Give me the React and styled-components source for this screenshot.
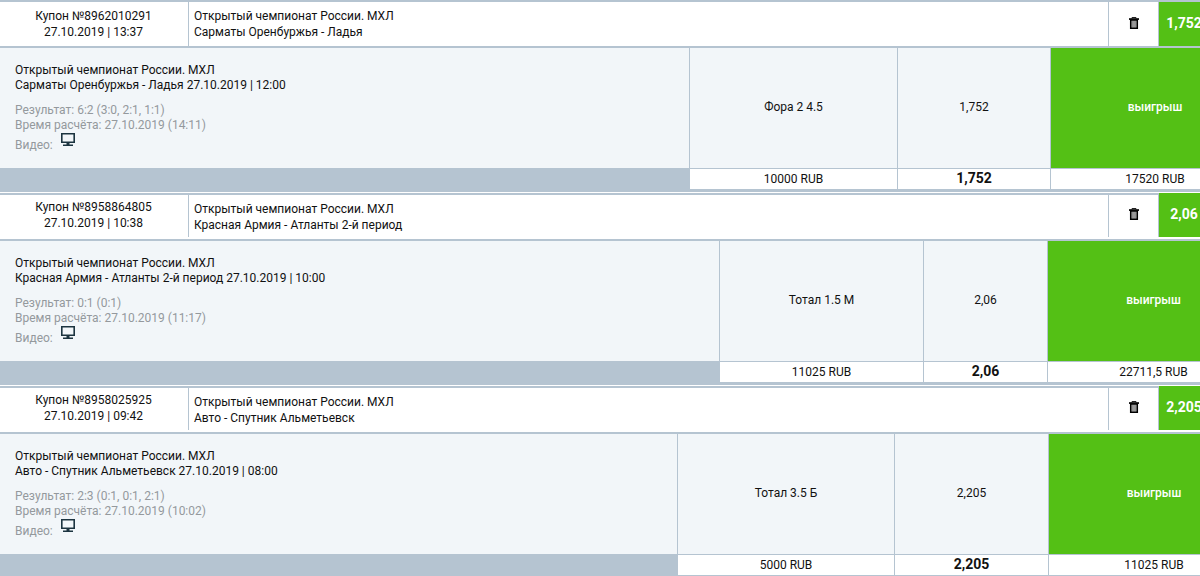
import React from 'react';
import styled, { createGlobalStyle } from 'styled-components';

const GlobalStyle = createGlobalStyle`
  * {
    box-sizing: border-box;
  }
  body {
    margin: 0;
    background: #fff;
    overflow: hidden;
    font-family: Roboto, 'Open Sans', sans-serif;
    font-size: 12px;
    color: #111;
  }
`;

const Page = styled.main`
  width: 1200px;
  height: 576px;
  overflow: hidden;
`;

const Coupon = styled.section`
  height: 192px;
  margin-bottom: 1px;
`;

const Header = styled.header`
  display: grid;
  grid-template-columns: 189px 920px 50px 50px;
  height: 48px;
  border-top: 2px solid #b5c4d1;
  border-bottom: 2px solid #b5c4d1;
  line-height: 16px;
`;

const HeaderCell = styled.div`
  height: ${({ $raised }) => ($raised ? '42px' : '44px')};
  border-right: 1px solid #b5c4d1;
`;

const CouponInfo = styled(HeaderCell)`
  padding: ${({ $raised }) => ($raised ? '4px' : '6px')} 1px 0 0;
  text-align: center;
`;

const MatchTitle = styled(HeaderCell)`
  padding: 6px 0 0 5px;
`;

const RemoveCell = styled(HeaderCell)`
  display: flex;
  justify-content: center;
  padding-top: ${({ $raised }) => ($raised ? '13px' : '15px')};
`;

const HeaderRate = styled.div`
  height: 44px;
  margin-top: ${({ $raised }) => ($raised ? '-2px' : '0')};
  padding-top: 1px;
  background: #54c015;
  color: #fff;
  font-size: 14px;
  font-weight: 700;
  line-height: 41px;
  text-align: center;
`;

const Body = styled.div`
  display: grid;
  grid-template-columns: ${({ $columns }) => $columns};
  grid-template-rows: 120px 21px;
  border-bottom: 3px solid #b5c4d1;
`;

const Details = styled.div`
  padding: 15px 0 0 15px;
  background: #f2f6f9;
  line-height: 15px;
`;

const Results = styled.div`
  margin-top: 10px;
  color: #94999d;
`;

const Video = styled.div`
  display: flex;
  padding-top: 5px;

  svg {
    margin: -5px 0 0 8px;
  }
`;

const Cell = styled.div`
  display: flex;
  align-items: center;
  justify-content: center;
  padding-bottom: 2px;
  border-left: 1px solid #b5c4d1;
  background: #f2f6f9;
`;

const WinCell = styled(Cell)`
  background: #54c015;
  color: #fff;
  font-weight: 500;
`;

const FooterBar = styled.div`
  margin-right: -1px;
  background: #b5c4d1;
  z-index: 1;
`;

const Total = styled(Cell)`
  padding: 0 0 ${({ $bold }) => ($bold ? '2px' : '0')};
  border-top: 1px solid #b5c4d1;
  background: #fff;
  font-size: ${({ $bold }) => ($bold ? '14px' : '12px')};
  font-weight: ${({ $bold }) => ($bold ? 700 : 400)};
  line-height: 16px;
`;

const TrashIcon = () => (
    <svg width="12" height="13" viewBox="0 0 12 13">
        <path d="M4 1.5V.5h4v1" fill="none" stroke="#222" />
        <path d="M1 1.2h10v1.7H1z" fill="#000" />
        <path d="M2.7 3h6.6v8.2H2.7z" fill="#aaa" stroke="#000" strokeWidth="1.5" />
        <path d="M4.9 4v6.4M7.1 4v6.4" stroke="#666" strokeWidth=".6" />
    </svg>
);

const MonitorIcon = () => (
    <svg width="14" height="13" viewBox="0 0 14 13">
        <path d="M.8.8h12.4v8.4H.8z" fill="none" stroke="#1c3440" strokeWidth="1.6" />
        <path d="M5.5 9h3v2.5h-3zM2 11.5h10V13H2z" fill="#1c3440" />
    </svg>
);

const coupons = [
    {
        id: '8962010291',
        date: '27.10.2019 | 13:37',
        match: 'Сарматы Оренбуржья - Ладья',
        start: '27.10.2019 | 12:00',
        result: '6:2 (3:0, 2:1, 1:1)',
        settled: '27.10.2019 (14:11)',
        bet: 'Фора 2 4.5',
        rate: '1,752',
        stake: '10000 RUB',
        payout: '17520 RUB',
        columns: '689px 208px 153px 209px',
    },
    {
        id: '8958864805',
        date: '27.10.2019 | 10:38',
        match: 'Красная Армия - Атланты 2-й период',
        start: '27.10.2019 | 10:00',
        result: '0:1 (0:1)',
        settled: '27.10.2019 (11:17)',
        bet: 'Тотал 1.5 М',
        rate: '2,06',
        stake: '11025 RUB',
        payout: '22711,5 RUB',
        columns: '719px 204px 124px 212px',
    },
    {
        id: '8958025925',
        date: '27.10.2019 | 09:42',
        match: 'Авто - Спутник Альметьевск',
        start: '27.10.2019 | 08:00',
        result: '2:3 (0:1, 0:1, 2:1)',
        settled: '27.10.2019 (10:02)',
        bet: 'Тотал 3.5 Б',
        rate: '2,205',
        stake: '5000 RUB',
        payout: '11025 RUB',
        columns: '677px 217px 154px 211px',
    },
];

const league = 'Открытый чемпионат России. МХЛ';

const CouponCard = ({ coupon, raised }) => (
    <Coupon>
        <Header>
            <CouponInfo $raised={raised}>
                <div>Купон №{coupon.id}</div>
                <div>{coupon.date}</div>
            </CouponInfo>
            <MatchTitle $raised={raised}>
                <div>{league}</div>
                <div>{coupon.match}</div>
            </MatchTitle>
            <RemoveCell $raised={raised}>
                <TrashIcon />
            </RemoveCell>
            <HeaderRate $raised={raised}>{coupon.rate}</HeaderRate>
        </Header>
        <Body $columns={coupon.columns}>
            <Details>
                <div>{league}</div>
                <div>{coupon.match} {coupon.start}</div>
                <Results>
                    <div>Результат: {coupon.result}</div>
                    <div>Время расчёта: {coupon.settled}</div>
                    <Video>Видео: <MonitorIcon /></Video>
                </Results>
            </Details>
            <Cell>{coupon.bet}</Cell>
            <Cell>{coupon.rate}</Cell>
            <WinCell>выигрыш</WinCell>
            <FooterBar />
            <Total>{coupon.stake}</Total>
            <Total $bold>{coupon.rate}</Total>
            <Total>{coupon.payout}</Total>
        </Body>
    </Coupon>
);

const App = () => (
    <>
        <GlobalStyle />
        <Page>
            {coupons.map((coupon, index) => (
                <CouponCard key={coupon.id} coupon={coupon} raised={index > 0} />
            ))}
        </Page>
    </>
);

export default App;
